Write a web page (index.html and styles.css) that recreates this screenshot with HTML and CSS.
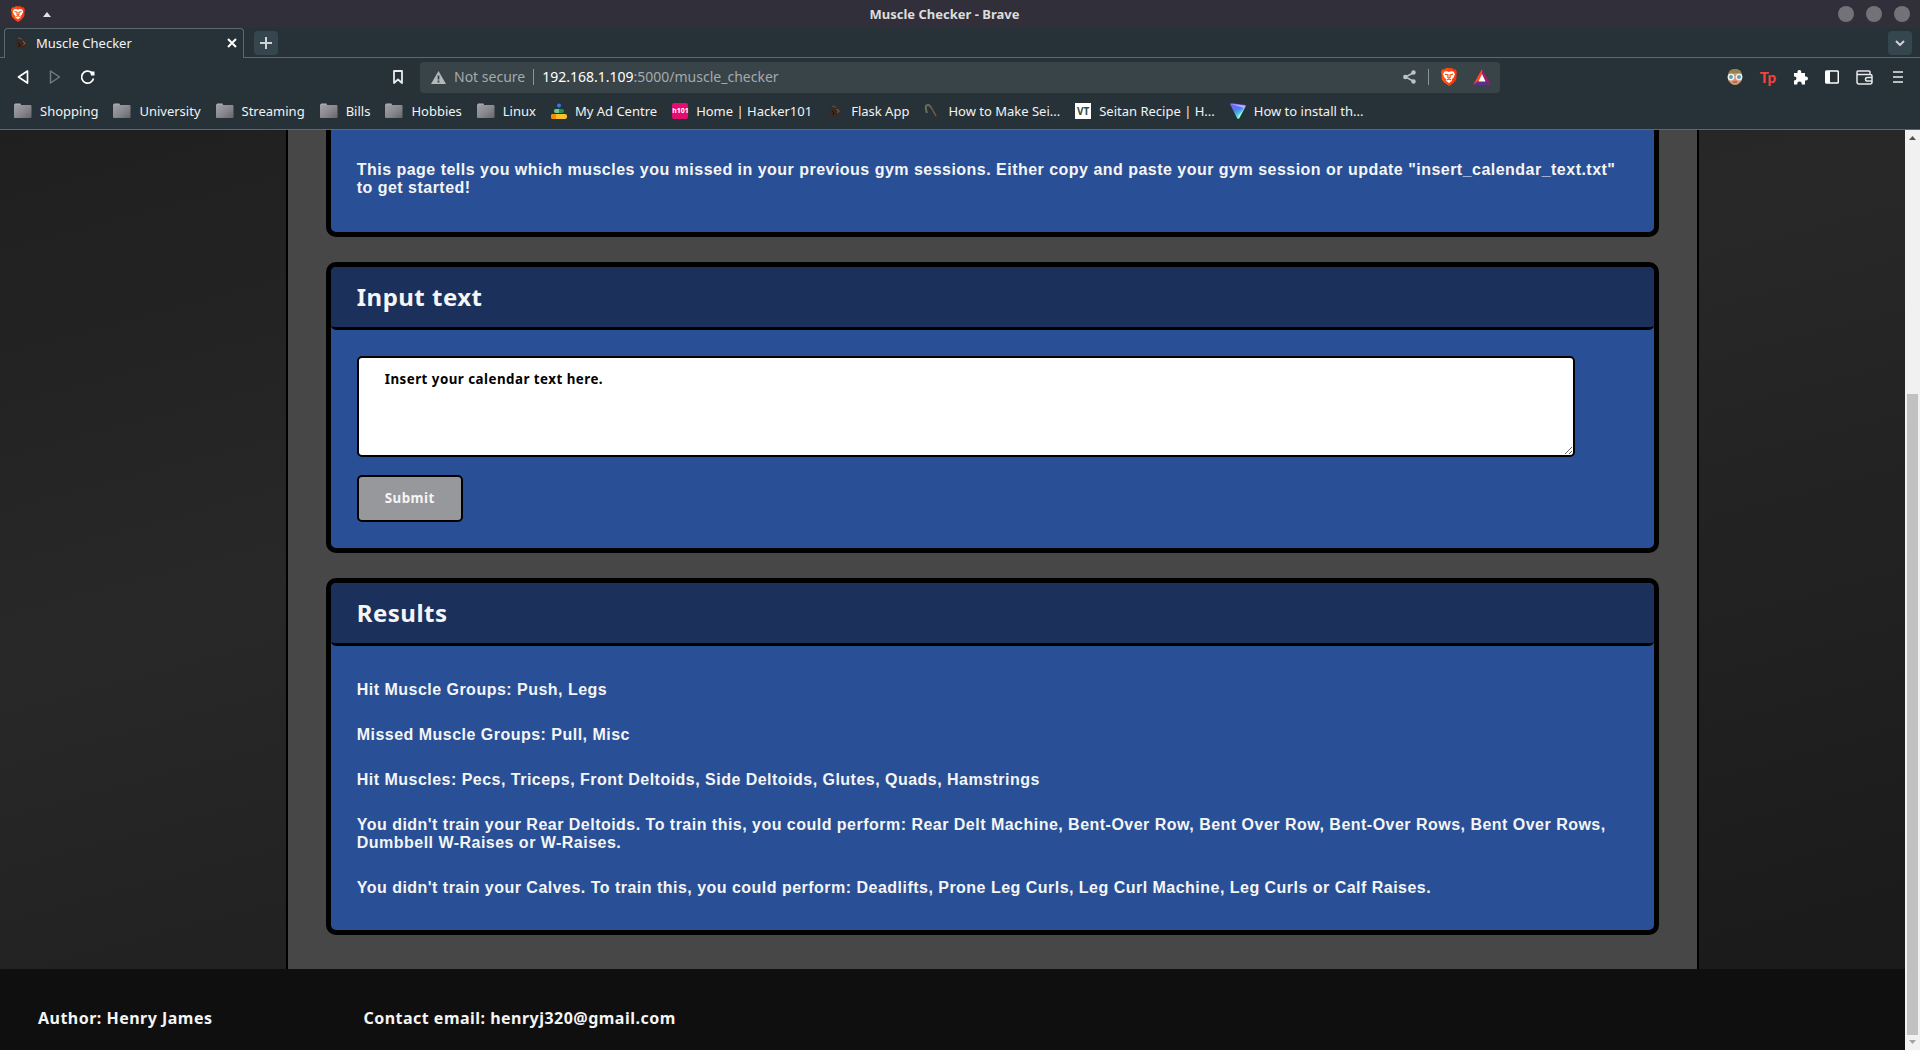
FILE: index.html
```html
<!DOCTYPE html>
<html lang="en">
<head>
<meta charset="utf-8">
<title>Muscle Checker</title>
<link rel="stylesheet" href="styles.css">
</head>
<body>
<svg class="defs" aria-hidden="true">
  <defs>
    <linearGradient id="folderFill" x1="0" y1="0" x2="1" y2="1"><stop offset="0" stop-color="#a3a1ab"/><stop offset=".5" stop-color="#8b8a92"/><stop offset="1" stop-color="#666"/></linearGradient>
    <linearGradient id="protonFill" x1="0" y1="0" x2=".5" y2="1"><stop offset="0" stop-color="#7a5cf5"/><stop offset=".5" stop-color="#4e7ff0"/><stop offset="1" stop-color="#5fffc0"/></linearGradient>
    <linearGradient id="braveFill" x1="0" x2="1"><stop offset="0" stop-color="#ff5a12"/><stop offset="1" stop-color="#f8320e"/></linearGradient>
    <symbol id="folder" viewBox="0 0 18 16"><path d="M0 2Q0 1 1 1H6.500Q7 1 7 2H16.500Q17.500 2 17.500 3V14Q17.500 15 16.500 15H1Q0 15 0 14Z" fill="url(#folderFill)"/><path d="M1 1H6.500" stroke="#bcb5ad"/></symbol>
    <symbol id="brave" viewBox="0 0 16 18"><path d="M5 0H11L12.500 1.500L14.500 1.300L16 4L15.500 6L15.300 11Q14.500 14 8 18Q1.500 14 .7 11L.5 6L0 4L1.500 1.300L3.500 1.500Z" fill="url(#braveFill)"/><path d="M3.500 3.500L6 3.300L8 4L10 3.300L12.500 3.500L14 6L12.600 9.500L11 11L10.800 13L8 15L5.200 13L5 11L3.400 9.500L2 6Z" fill="#fff"/><path d="M4 6.200L7 7L6.800 9.500L8 10.300L9.200 9.500L9 7L12 6.200M5.800 12L8 11L10.200 12" fill="none" stroke="#f8500e" stroke-width="1.200"/></symbol>
    <symbol id="biceps" viewBox="0 0 12 12"><path d="M3 2L5 .5L7 2L6.500 4L9 4.500L11 5L11 9L9 11.500H4L1 9.500L1 5.500Z" fill="#3a2923"/><path d="M3 1.500L5.500 1L6.500 3" fill="none" stroke="#6d5148"/><path d="M7.500 4L10 6L8.500 8" fill="none" stroke="#97521f" stroke-width="1.200"/><path d="M3 6L5 8L4 10" stroke="#16100e" fill="none"/></symbol>
  </defs>
</svg>

<div class="browser">
  <header class="titlebar">
    <div class="titlebar-side">
      <svg class="brave-logo" width="14" height="16"><use href="#brave"/></svg>
      <svg width="8" height="5" viewBox="0 0 8 5"><path d="M0 5L4 0L8 5Z" fill="#e2e2e4"/></svg>
    </div>
    <div class="window-title">Muscle Checker - Brave</div>
    <div class="titlebar-side window-controls">
      <button aria-label="Minimise"></button><button aria-label="Maximise"></button><button aria-label="Close window"></button>
    </div>
  </header>

  <div class="tabstrip">
    <div class="tab">
      <svg width="12" height="12"><use href="#biceps"/></svg>
      <span class="tab-title">Muscle Checker</span>
      <button class="plain" aria-label="Close tab"><svg width="10" height="10" viewBox="0 0 10 10"><path d="M1 1L9 9M9 1L1 9" stroke="#fff" stroke-width="2"/></svg></button>
    </div>
    <button class="square" aria-label="New tab"><svg width="12" height="12" viewBox="0 0 12 12"><path d="M6 0V12M0 6H12" stroke="#d0d3d5" stroke-width="2"/></svg></button>
    <button class="square tab-search" aria-label="Search tabs"><svg width="10" height="6" viewBox="0 0 10 6"><path d="M1 1L5 5L9 1" fill="none" stroke="#d0d3d5" stroke-width="2"/></svg></button>
  </div>

  <div class="toolbar">
    <div class="nav">
      <button class="plain" aria-label="Back"><svg width="12" height="14" viewBox="0 0 12 14"><path d="M10.500 1L1.500 7L10.500 13Z" fill="none" stroke="#fff" stroke-width="1.700" stroke-linejoin="round"/></svg></button>
      <button class="plain" aria-label="Forward"><svg width="12" height="14" viewBox="0 0 12 14"><path d="M1.500 1L10.500 7L1.500 13Z" fill="none" stroke="#727b80" stroke-width="1.500" stroke-linejoin="round"/></svg></button>
      <button class="plain" aria-label="Reload"><svg width="14" height="14" viewBox="0 0 14 14"><path d="M12.500 8.500A6 6 0 1 1 10.500 2.500" fill="none" stroke="#fff" stroke-width="1.700"/><path d="M9 1.500H13.500V5.500H10Z" fill="#fff"/></svg></button>
      <button class="plain bookmark-page" aria-label="Bookmark this page"><svg width="10" height="14" viewBox="0 0 10 14"><path d="M1 1H9V13L5 9.500L1 13Z" fill="none" stroke="#e9ebec" stroke-width="1.800" stroke-linejoin="round"/></svg></button>
    </div>
    <div class="address">
      <svg width="15" height="13" viewBox="0 0 15 13"><path d="M7.500 0L15 13H0Z" fill="#b4b9bb"/><path d="M7.500 4.500V8.500M7.500 9.500V11.500" stroke="#394449" stroke-width="1.800"/></svg>
      <span class="muted">Not secure</span>
      <span class="divider"></span>
      <span class="url"><b>192.168.1.109</b>:5000/muscle_checker</span>
      <div class="address-actions">
        <svg width="13" height="14" viewBox="0 0 13 14"><path d="M11 2.500L2.500 7L11 11.500" fill="none" stroke="#bfc3c5" stroke-width="1.500"/><g fill="#bfc3c5"><circle cx="10.500" cy="2.500" r="2.200"/><circle cx="2.300" cy="7" r="2.200"/><circle cx="10.500" cy="11.500" r="2.200"/></g></svg>
        <span class="divider"></span>
        <svg class="shield" width="16" height="18"><use href="#brave"/></svg>
        <svg width="18" height="16" viewBox="0 0 18 16"><path d="M9 0L0 16L9 9.500Z" fill="#ff4724"/><path d="M9 0L18 16L9 9.500Z" fill="#9e1f63"/><path d="M0 16H18L9 9.500Z" fill="#5e2f88"/><path d="M9 5L12.500 12.500H5.500Z" fill="#fff"/></svg>
      </div>
    </div>
    <div class="extensions">
      <svg width="16" height="16" viewBox="0 0 16 16"><path d="M1 6Q2 0 8 0Q14 0 15 6V11Q12 16 8 16Q4 16 1 11Z" fill="#d5956f"/><path d="M1 6Q2 0 8 0Q14 0 15 6L9 4Z" fill="#94814e"/><circle cx="4" cy="8" r="2.700" fill="#6697a5" stroke="#e9f2f4" stroke-width="1.500"/><circle cx="12" cy="8" r="2.700" fill="#6697a5" stroke="#e9f2f4" stroke-width="1.500"/><path d="M6 13H10" stroke="#87503d"/></svg>
      <span class="tp">Tp</span>
      <svg width="15" height="15" viewBox="0 0 15 15"><path d="M1 3H4.500Q4 0 6.300 0Q8.600 0 8.200 3H12V6.500Q15 6 15 8.500Q15 11 12 10.500V14.500H8.700Q9 11.500 6.500 11.500Q4 11.500 4.300 14.500H1V10.500Q3.500 10.500 3.500 8.300Q3.500 6.300 1 6.500Z" fill="#fff"/></svg>
      <svg width="14" height="14" viewBox="0 0 14 14"><rect x=".7" y="1" width="12.600" height="12" rx="1" fill="none" stroke="#fff" stroke-width="1.500"/><path d="M1 1H5V13H1Z" fill="#fff"/></svg>
      <svg width="17" height="15" viewBox="0 0 17 15"><path d="M14 4.500V2Q14 1 13 1H2Q1 1 1 2V12Q1 14 3 14H14Q16 14 16 12V6Q16 4.500 14.500 4.500H1.500" fill="none" stroke="#e6e8e9" stroke-width="1.500"/><path d="M16 7.500H11.500Q9.500 7.500 9.500 9.200Q9.500 11 11.500 11H16" fill="none" stroke="#e6e8e9" stroke-width="1.500"/></svg>
      <button class="plain menu" aria-label="Menu"><svg width="10" height="12" viewBox="0 0 10 12"><path d="M0 1H10M0 6H10M0 11H10" stroke="#e9ebec" stroke-width="1.600"/></svg></button>
    </div>
  </div>

  <nav class="bookmarks" aria-label="Bookmarks">
    <a href="#"><svg width="18" height="16"><use href="#folder"/></svg>Shopping</a>
    <a href="#"><svg width="18" height="16"><use href="#folder"/></svg>University</a>
    <a href="#"><svg width="18" height="16"><use href="#folder"/></svg>Streaming</a>
    <a href="#"><svg width="18" height="16"><use href="#folder"/></svg>Bills</a>
    <a href="#"><svg width="18" height="16"><use href="#folder"/></svg>Hobbies</a>
    <a href="#"><svg width="18" height="16"><use href="#folder"/></svg>Linux</a>
    <a href="#"><svg width="16" height="16" viewBox="0 0 16 16"><circle cx="8" cy="2.500" r="2" fill="#2f7bea"/><rect x="3" y="6" width="10" height="4" rx="2" fill="#259247"/><path d="M5 6H8V10H5Q3 10 3 8Q3 6 5 6Z" fill="#72c794"/><rect x="0" y="11" width="16" height="5" rx="2" fill="#fdbf2d"/><path d="M2 11H5V16H2Q0 16 0 13.500Q0 11 2 11Z" fill="#f28e0a"/></svg>My Ad Centre</a>
    <a href="#"><span class="favicon pink">h101</span>Home | Hacker101</a>
    <a href="#"><svg width="16" height="12"><use href="#biceps"/></svg>Flask App</a>
    <a href="#"><svg width="16" height="16" viewBox="0 0 16 16"><path d="M3 10Q0 2 4 2Q6 2 7 5" fill="none" stroke="#63705f" stroke-width="2"/><path d="M5 3Q7 3 8 6L12 13" fill="none" stroke="#75553c" stroke-width="1.600"/></svg>How to Make Sei...</a>
    <a href="#"><span class="favicon white">VT</span>Seitan Recipe | H...</a>
    <a href="#"><svg width="16" height="16" viewBox="0 0 16 16"><path d="M0 1Q1 0 2 .3L15 2Q16.500 2.500 15.500 4L9 15.500Q7.800 16.500 7 15Z" fill="url(#protonFill)"/><path d="M1 1L15.500 2.500L14 6Q13 4 10 3.700Z" fill="#c9a4ff"/><path d="M14.500 5L9 15.500L8 13Z" fill="#8dfde0"/></svg>How to install th...</a>
  </nav>

  <div class="viewport">
    <div class="page">
      <main class="content">
        <section class="card card-continued">
          <div class="card-text">
            <p>This page tells you which muscles you missed in your previous gym sessions. Either copy and paste your gym session or update "insert_calendar_text.txt" to get started!</p>
          </div>
        </section>

        <section class="card">
          <h2>Input text</h2>
          <form class="card-form">
            <textarea aria-label="Calendar text">Insert your calendar text here.</textarea>
            <button class="submit" type="button">Submit</button>
          </form>
        </section>

        <section class="card">
          <h2>Results</h2>
          <div class="card-text">
            <p>Hit Muscle Groups: Push, Legs</p>
            <p>Missed Muscle Groups: Pull, Misc</p>
            <p>Hit Muscles: Pecs, Triceps, Front Deltoids, Side Deltoids, Glutes, Quads, Hamstrings</p>
            <p>You didn't train your Rear Deltoids. To train this, you could perform: Rear Delt Machine, Bent-Over Row, Bent Over Row, Bent-Over Rows, Bent Over Rows, Dumbbell W-Raises or W-Raises.</p>
            <p>You didn't train your Calves. To train this, you could perform: Deadlifts, Prone Leg Curls, Leg Curl Machine, Leg Curls or Calf Raises.</p>
          </div>
        </section>
      </main>
      <footer class="page-footer">
        <span>Author: Henry James</span>
        <span>Contact email: henryj320@gmail.com</span>
      </footer>
    </div>
    <div class="scrollbar" aria-hidden="true">
      <svg width="7" height="4" viewBox="0 0 7 4"><path d="M0 4L3.500 0L7 4Z" fill="#505050"/></svg>
      <div class="track"><div class="thumb"></div></div>
      <svg width="7" height="4" viewBox="0 0 7 4"><path d="M0 0L3.500 4L7 0Z" fill="#a3a3a3"/></svg>
    </div>
  </div>
</div>
</body>
</html>
```

FILE: styles.css
```css
* { box-sizing: border-box; }

body {
  margin: 0;
  font-family: "Noto Sans", sans-serif;
  background: #273238;
}

button { font: inherit; border: 0; padding: 0; cursor: pointer; }
a { color: inherit; text-decoration: none; }
svg { display: block; flex: none; }
.defs { position: absolute; width: 0; height: 0; }

.browser {
  display: flex;
  flex-direction: column;
  height: 100vh;
  overflow: hidden;
  color: #f2f3f4;
  font-size: 13px;
  line-height: 18px;
}

/* Window frame */
.titlebar {
  display: flex;
  align-items: center;
  justify-content: space-between;
  flex: none;
  height: 28px;
  padding: 0 10px;
  background: #31303a;
}
.titlebar-side { display: flex; align-items: center; gap: 18px; }
.brave-logo { margin-left: 1px; }
.window-title { padding-bottom: 1px; color: #dddddf; font-weight: 700; }
.window-controls { gap: 12px; }
.window-controls button {
  width: 16px;
  height: 16px;
  border-radius: 50%;
  background: #737278;
}

.tabstrip {
  display: flex;
  flex: none;
  height: 30px;
  padding: 0 8px 0 4px;
  border-bottom: 1px solid #5c696f;
}
.tab {
  display: flex;
  align-items: center;
  width: 240px;
  height: 30px;
  margin-right: 10px;
  padding: 0 6px 2px 10px;
  gap: 9px;
  border: 1px solid #5c696f;
  border-bottom: 0;
  border-radius: 4px 4px 0 0;
  background: #273238;
}
.tab-title { flex: 1; }
.square {
  display: grid;
  place-items: center;
  width: 24px;
  height: 24px;
  margin-top: 3px;
  border-radius: 4px;
  background: #36464f;
}
.tab-search { margin-left: auto; }

.plain { display: grid; place-items: center; background: none; }

.toolbar { display: flex; flex: none; align-items: center; height: 38px; }
.nav { display: flex; flex: 1; align-items: center; gap: 20px; padding: 0 17px; }
.bookmark-page { margin-left: auto; }
.address {
  display: flex;
  flex: 0 1 1080px;
  align-items: center;
  gap: 8px;
  height: 31px;
  padding: 0 9px 0 11px;
  border-radius: 4px;
  background: #394449;
  color: #a4aaad;
  font-size: 14px;
}
.url b { color: #fff; font-weight: 400; }
.divider { width: 1px; height: 16px; background: #8d9497; }
.address-actions { display: flex; align-items: center; margin-left: auto; gap: 12px; }
.shield { margin-right: 4px; }
.extensions {
  display: flex;
  flex: 1;
  align-items: center;
  justify-content: flex-end;
  gap: 17px;
  padding: 0 17px;
}
.menu { margin-left: 3px; }
.tp { color: #f4413c; font: 900 15px/16px Lato, sans-serif; }

.bookmarks {
  display: flex;
  flex: none;
  align-items: center;
  height: 34px;
  padding: 0 14px 4px;
  gap: 15px;
  border-bottom: 1px solid #5c696f;
  white-space: nowrap;
}
.bookmarks a { display: flex; align-items: center; gap: 8px; }
.favicon {
  display: grid;
  place-items: center;
  width: 16px;
  height: 16px;
  font: 700 7px/16px "Noto Sans", sans-serif;
}
.pink { border-radius: 2px; background: #e30d70; color: #fff; }
.white { background: #fff; color: #334b43; font-size: 10px; }

/* Web page, scrolled to its end */
.viewport { display: flex; flex: 1; min-height: 0; }
.page {
  display: flex;
  flex: 1;
  flex-direction: column;
  min-width: 0;
  background: linear-gradient(165deg, #191919, #282828, #191919) bottom / 100% 1280px;
  color: #f5f5f5;
  font-size: 16px;
  font-weight: 700;
  letter-spacing: 0.03rem;
}
.content {
  display: flex;
  flex: 1;
  flex-direction: column;
  gap: 25px;
  box-sizing: content-box;
  width: 74%;
  margin-left: 15%;
  border: solid #000;
  border-width: 0 2px;
  background: #474747;
}
.card {
  margin: 0 38px;
  border: 5px solid #000;
  border-radius: 10px;
  background: #295096;
}
.card-continued { border-top: 0; border-radius: 0 0 10px 10px; }
.card h2 {
  margin: 0;
  padding: 13px 26px 14px;
  border-bottom: 3px solid #000;
  border-radius: 5px;
  background: #1b315b;
  font-size: 24px;
  line-height: 33px;
}
.card-text {
  display: flex;
  flex-direction: column;
  gap: 27px;
  padding: 35px 26px 33px;
  font: 700 16px/18px "Liberation Sans", Arial, sans-serif;
}
.card-continued .card-text { padding: 31px 26px 35px; }
.card-text p { margin: 0; }
.card-form {
  display: flex;
  flex-direction: column;
  align-items: flex-start;
  gap: 18px;
  padding: 26px;
}
.card-form textarea,
.submit {
  border: 2px solid #000;
  border-radius: 5px;
  font-family: "Noto Sans", sans-serif;
  font-size: smaller;
  font-weight: 700;
  line-height: 18px;
  letter-spacing: inherit;
}
.card-form textarea {
  width: calc(100% - 53px);
  height: 101px;
  padding: 12px 26px;
  background: #fff;
  color: #000;
}
.submit {
  padding: 12px 26px 13px;
  background: #97989c;
  color: #f5f5f5;
}
.page-footer {
  display: flex;
  flex: none;
  gap: 151px;
  padding: 38px 38px 21px;
  background: #0f0f0f;
  line-height: 22px;
}

.scrollbar {
  display: flex;
  flex-direction: column;
  align-items: center;
  width: 15px;
  padding: 6px 0;
  gap: 5px;
  background: #f1f1f1;
}
.track { display: flex; flex: 1; align-items: flex-end; }
.thumb { width: 11px; height: 72%; background: #c1c1c1; }
```
